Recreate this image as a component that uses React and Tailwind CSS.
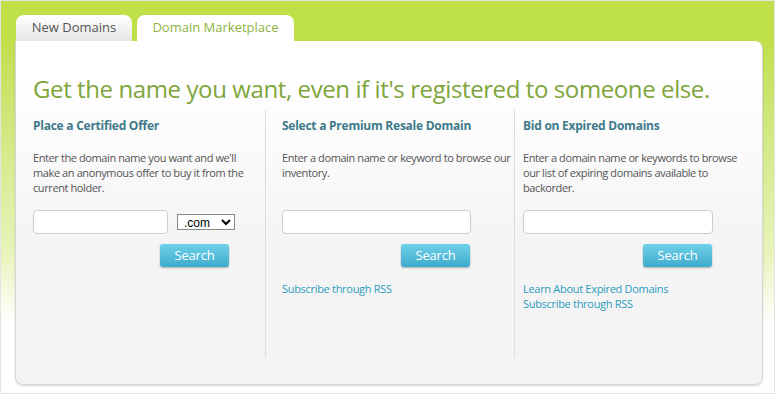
import React from 'react';

const font = { fontFamily: '"Open Sans", "Liberation Sans", sans-serif' };

const SearchButton = () => (
  <button className="h-[23px] w-[69px] rounded-[3px] bg-gradient-to-b from-[#6dd0e8] to-[#3eabcd] text-[13px] tracking-[-0.2px] text-white shadow-[0_1px_2px_rgba(0,0,0,0.3)]">
    Search
  </button>
);

const Column = ({ title, text, textWidth, children, links, className }) => (
  <div className={className}>
    <h3 className="text-[12px] font-bold leading-[16px] tracking-[-0.25px] text-[#3d7a8a]">{title}</h3>
    <p className={`mt-[16px] h-[45px] text-[11px] leading-[15px] tracking-[-0.4px] text-[#555] ${textWidth}`}>{text}</p>
    {children}
    {links && (
      <div className="mt-[14px] flex flex-col text-[11px] leading-[15px] tracking-[-0.3px] text-[#2b9cbd]">
        {links.map((l) => (
          <a key={l} href="#" className="w-fit">{l}</a>
        ))}
      </div>
    )}
  </div>
);

export default function App() {
  return (
    <div style={font} className="h-[394px] w-[775px] overflow-hidden border border-[#e4e4e4] bg-gradient-to-b from-[#c0e04a] from-[10%] via-[#e8f4bc] via-[65%] to-white to-[82%]">
      <div className="ml-[15px] mt-[14px] flex gap-[5px]">
        <div className="flex h-[26px] w-[116px] items-center justify-center rounded-t-[8px] bg-gradient-to-b from-white to-[#e6e6e6] text-[13px] text-[#555]">
          New Domains
        </div>
        <div className="flex h-[26px] w-[157px] items-center justify-center rounded-t-[8px] bg-white text-[13px] text-[#8db33f]">
          Domain Marketplace
        </div>
      </div>
      <div className="ml-[14px] h-[344px] w-[748px] rounded-b-[8px] rounded-tr-[8px] border-x border-b border-[#d6d6d6] bg-gradient-to-b from-white from-[10%] to-[#f4f4f4] to-[60%] shadow-[0_1px_2px_rgba(0,0,0,0.15)]">
        <h1 className="whitespace-nowrap pl-[17px] pt-[32px] text-[24px] leading-[32px] tracking-[-0.4px] text-[#7ea53b]">
          Get the name you want, even if it's registered to someone else.
        </h1>
        <div className="mt-[5px] flex">
          <Column
            className="h-[248px] w-[250px] border-r border-[#ddd] pl-[17px] pt-[8px]"
            textWidth="w-[225px]"
            title="Place a Certified Offer"
            text="Enter the domain name you want and we'll make an anonymous offer to buy it from the current holder."
          >
            <div className="mt-[15px] flex items-center gap-[9px]">
              <input className="h-[24px] w-[135px] rounded-[4px] border border-[#ccc] bg-white" />
              <select className="h-[16px] w-[58px] border border-[#888] bg-white px-[2px] text-[12px] leading-[14px] text-black" style={{ fontFamily: '"Liberation Sans", sans-serif' }}>
                <option>.com</option>
              </select>
            </div>
            <div className="mt-[10px] flex w-[196px] justify-end">
              <SearchButton />
            </div>
          </Column>
          <Column
            className="h-[248px] w-[249px] border-r border-[#ddd] pl-[16px] pt-[8px]"
            textWidth="w-[232px]"
            title="Select a Premium Resale Domain"
            text="Enter a domain name or keyword to browse our inventory."
            links={["Subscribe through RSS"]}
          >
            <div className="mt-[15px]">
              <input className="h-[24px] w-[189px] rounded-[4px] border border-[#ccc] bg-white" />
            </div>
            <div className="mt-[10px] flex w-[188px] justify-end">
              <SearchButton />
            </div>
          </Column>
          <Column
            className="h-[248px] flex-1 pl-[8px] pt-[8px]"
            textWidth="w-[220px]"
            title="Bid on Expired Domains"
            text="Enter a domain name or keywords to browse our list of expiring domains available to backorder."
            links={["Learn About Expired Domains", "Subscribe through RSS"]}
          >
            <div className="mt-[15px]">
              <input className="h-[24px] w-[190px] rounded-[4px] border border-[#ccc] bg-white" />
            </div>
            <div className="mt-[10px] flex w-[189px] justify-end">
              <SearchButton />
            </div>
          </Column>
        </div>
      </div>
    </div>
  );
}
